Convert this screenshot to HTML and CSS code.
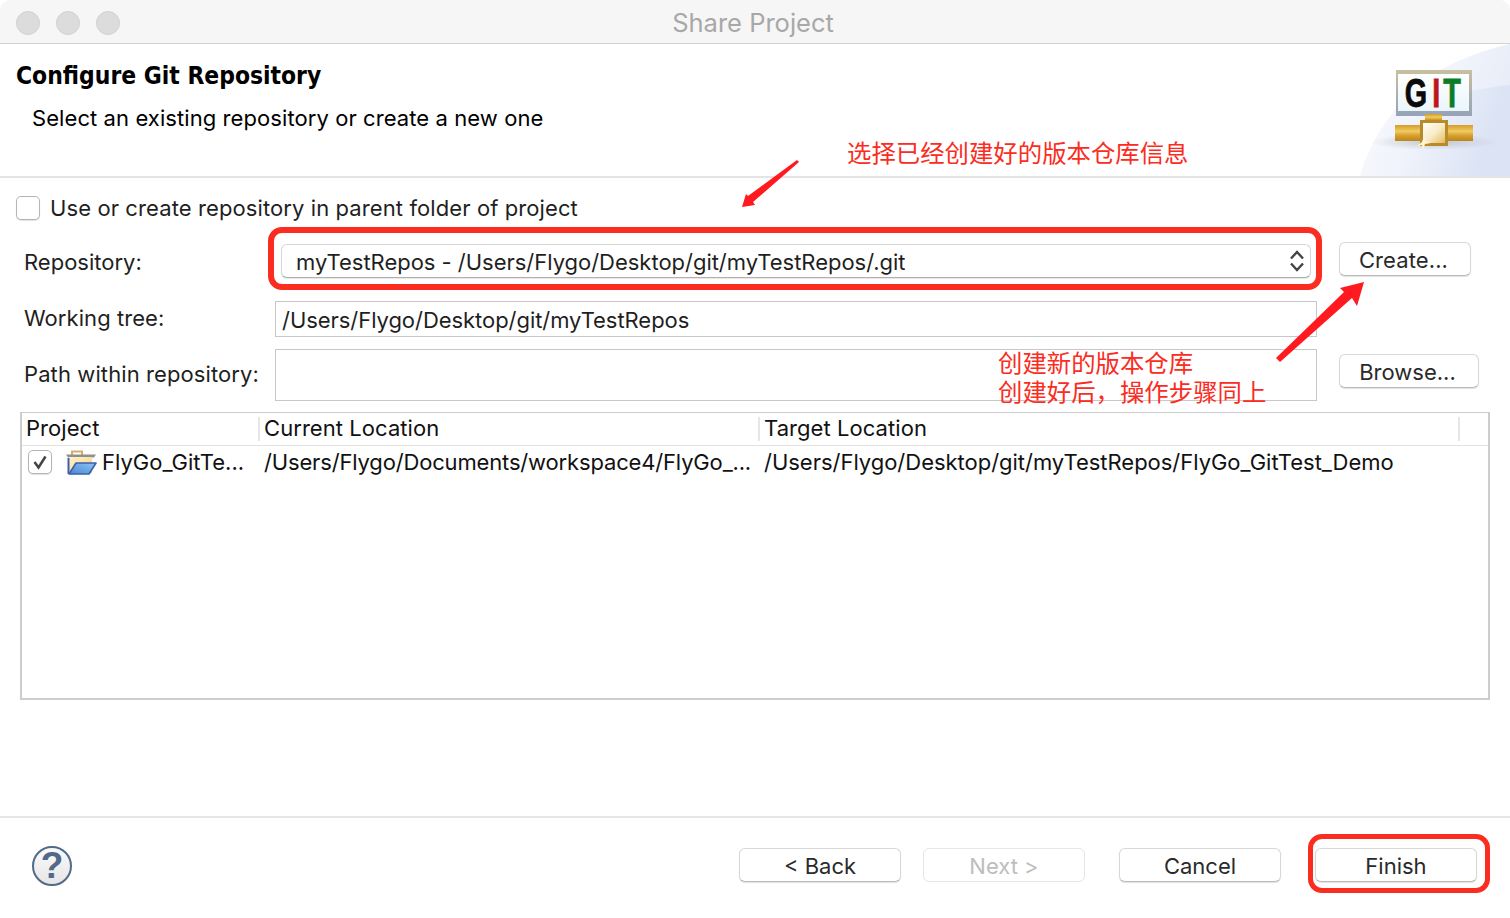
FILE: index.html
```html
<!DOCTYPE html>
<html lang="en">
<head>
<meta charset="utf-8">
<title>Share Project</title>
<link rel="stylesheet" href="styles.css">
</head>
<body>
<div class="window">
  <header class="titlebar">
    <div class="lights"><span class="light"></span><span class="light"></span><span class="light"></span></div>
    <div class="title">Share Project</div>
  </header>
  <section class="banner">
    <div class="banner-text">
      <h1 class="heading">Configure Git Repository</h1>
      <p class="sub">Select an existing repository or create a new one</p>
    </div>
    <svg class="banner-art" width="152" height="133" viewBox="0 0 152 133">
      <defs>
        <linearGradient id="wash" x1="0" y1="0" x2="1" y2="0.3"><stop offset="0" stop-color="#fbfcfe"/><stop offset=".5" stop-color="#f0f3fb"/><stop offset="1" stop-color="#dbe3f4"/></linearGradient>
        <linearGradient id="pipe" x1="0" y1="0" x2="0" y2="1"><stop offset="0" stop-color="#d69c2a"/><stop offset=".4" stop-color="#f0cb62"/><stop offset=".65" stop-color="#d8a02c"/><stop offset="1" stop-color="#b88420"/></linearGradient>
        <linearGradient id="cube" x1="0" y1="0" x2="1" y2="1"><stop offset="0" stop-color="#ffffff"/><stop offset=".5" stop-color="#f8eecb"/><stop offset="1" stop-color="#e4b44c"/></linearGradient>
        <linearGradient id="sign" x1="0" y1="0" x2="0" y2="1"><stop offset="0" stop-color="#c8bf9f"/><stop offset="1" stop-color="#95a3b8"/></linearGradient>
        <linearGradient id="screen" x1="0" y1="0" x2="0" y2="1"><stop offset="0" stop-color="#ffffff"/><stop offset="1" stop-color="#eaf6fb"/></linearGradient>
        <radialGradient id="shadow"><stop offset="0" stop-color="#a4a6ac" stop-opacity=".55"/><stop offset="1" stop-color="#a4a6ac" stop-opacity="0"/></radialGradient>
      </defs>
      <path d="M2 133C10 95 50 40 88 23C110 12 130 5 152 0V133Z" fill="url(#wash)"/>
      <path d="M60 62C90 50 120 45 152 41V0C130 5 110 12 88 23C78 28 68 40 60 62Z" fill="#fff" opacity=".35"/>
      <ellipse cx="76" cy="98" rx="64" ry="8" fill="url(#shadow)"/>
      <rect x="38" y="26" width="76" height="46" fill="url(#sign)"/>
      <rect x="40" y="30" width="71" height="37" fill="url(#screen)"/>
      <text class="git-letter" transform="scale(.72 1)" y="63"><tspan x="65" fill="#0a0a0a" stroke="#0a0a0a">G</tspan><tspan x="103" fill="#c0141c" stroke="#c0141c">I</tspan><tspan x="118.5" fill="#0b7d25" stroke="#0b7d25">T</tspan></text>
      <rect x="67" y="70" width="17" height="8" fill="url(#pipe)"/>
      <rect x="37" y="81" width="78" height="16" fill="url(#pipe)"/>
      <rect x="63.5" y="77.5" width="25" height="23" fill="url(#cube)" stroke="#b78a2a" stroke-width="3"/>
      <path d="M59 102L64 98L66 92L67.5 97L73 99L67 100L65 106L64 101Z" fill="#fff6cf"/>
    </svg>
  </section>

  <main class="form">
    <label class="check-row"><span class="checkbox"></span><span class="tight">Use or create repository in parent folder of project</span></label>
    <div class="field-row repo-row">
      <span class="field-label">Repository:</span>
      <div class="select">
        <span class="select-text">myTestRepos - /Users/Flygo/Desktop/git/myTestRepos/.git</span>
        <svg class="updown" width="14" height="24" viewBox="0 0 14 24"><path d="M1 9.5L7 3L13 9.5M1 14.5L7 21L13 14.5" fill="none" stroke="#444" stroke-width="2.4"/></svg>
      </div>
      <button class="btn btn-create">Create...</button>
    </div>
    <div class="field-row tree-row">
      <span class="field-label">Working tree:</span>
      <div class="input tree-input">/Users/Flygo/Desktop/git/myTestRepos</div>
    </div>
    <div class="field-row path-row">
      <span class="field-label path-label">Path within repository:</span>
      <div class="input path-input"></div>
      <button class="btn btn-browse">Browse...</button>
    </div>

    <div class="table">
      <div class="thead">
        <div class="th">Project</div>
        <div class="th">Current Location</div>
        <div class="th">Target Location</div>
        <div class="th"></div>
      </div>
      <div class="tr">
        <div class="td project-cell">
          <span class="checkbox"><svg width="16" height="16" viewBox="0 0 16 16"><path d="M2.5 8L6.5 13.5L13.5 2.5" fill="none" stroke="#444" stroke-width="2.5"/></svg></span>
          <svg class="folder" width="32" height="26" viewBox="0 0 32 26">
            <defs>
              <linearGradient id="paper" x1="0" y1="0" x2="1" y2="1"><stop offset="0" stop-color="#fff3c8"/><stop offset="1" stop-color="#f6cf80"/></linearGradient>
              <linearGradient id="flap" x1="1" y1="0" x2="0" y2="1"><stop offset="0" stop-color="#8cc6f6"/><stop offset="1" stop-color="#4a86d2"/></linearGradient>
            </defs>
            <path d="M7 8V2.5h10V8" fill="none" stroke="#d2ad6c" stroke-width="2"/>
            <path d="M1 5.5h30l-2 3H3z" fill="#8f8f8f"/>
            <path d="M4 8h23v16H4z" fill="url(#paper)"/>
            <path d="M3.5 9V25" stroke="#3c5fae" stroke-width="2"/>
            <path d="M11 14H31L24 25H4z" fill="url(#flap)" stroke="#3c5fae" stroke-width="1.6" stroke-linejoin="round"/>
          </svg>
          <span class="cell-text">FlyGo_GitTe...</span>
        </div>
        <div class="td cell-current">/Users/Flygo/Documents/workspace4/FlyGo_...</div>
        <div class="td cell-target">/Users/Flygo/Desktop/git/myTestRepos/FlyGo_GitTest_Demo</div>
      </div>
    </div>
  </main>

  <footer class="footer">
    <div class="help">?</div>
    <div class="footer-buttons">
      <button class="btn wide">&lt; Back</button>
      <button class="btn wide disabled">Next &gt;</button>
      <button class="btn wide cancel">Cancel</button>
      <button class="btn wide finish">Finish</button>
    </div>
  </footer>
</div>

<div class="note note-a">选择已经创建好的版本仓库信息</div>
<div class="note note-b">创建新的版本仓库<br>创建好后，操作步骤同上</div>
<div class="redbox redbox-repo"></div>
<div class="redbox redbox-finish"></div>
<svg class="arrows" width="1510" height="918" viewBox="0 0 1510 918">
  <path d="M797 160L748 196L746 194L742 207L755 205L753 202L799 162Z" fill="#ff1a20"/>
  <path d="M1280 362L1352 298L1357 306L1364 282L1340 288L1344 292L1276 358Z" fill="#ff1a20"/>
</svg>
</body>
</html>
```
FILE: styles.css
```css
* { box-sizing: border-box; }
html, body { margin: 0; padding: 0; background: #fff; }
body {
  position: relative;
  width: 1510px;
  height: 918px;
  overflow: hidden;
  font-family: "Inter", "Liberation Sans", sans-serif;
  font-size: 22px;
  color: #1f1f1f;
}
.window { width: 1510px; height: 918px; display: flex; flex-direction: column; background: #fff; }

.titlebar {
  height: 44px;
  flex: none;
  background: #f6f6f6;
  border-bottom: 1px solid #d2d2d2;
  border-radius: 10px 10px 0 0;
  position: relative;
  display: flex;
  align-items: center;
  justify-content: center;
}
.lights { position: absolute; left: 16px; top: 11px; display: flex; gap: 16px; }
.light { width: 24px; height: 24px; border-radius: 50%; background: #dcdcdc; border: 1px solid #d2d2d2; }
.title { color: #a8a8a8; font-size: 25.5px; margin-left: -4px; margin-top: 2px; }

.banner {
  height: 134px;
  flex: none;
  border-bottom: 2px solid #e4e4e4;
  display: flex;
  justify-content: space-between;
  overflow: hidden;
}
.banner-text { padding: 15px 0 0 16px; }
.heading { margin: 0; font: bold 24.4px/34px "DejaVu Sans Condensed", "DejaVu Sans", sans-serif; color: #000; }
.sub { margin: 10px 0 0 16px; font-size: 22px; line-height: 30px; color: #000; letter-spacing: .08px; }
.banner-art { flex: none; }
.git-letter { font: bold 40px "Liberation Sans", sans-serif; stroke-width: .8px; }

.form { flex: 1; display: flex; flex-direction: column; padding: 0 20px; }
.check-row { display: flex; align-items: center; gap: 10px; margin: 17px 0 0 -4px; height: 26px; }
.tight { letter-spacing: .1px; }
.checkbox {
  flex: none;
  width: 24px;
  height: 24px;
  border: 1px solid #b4b4b4;
  border-radius: 5px;
  background: #fff;
  box-shadow: 0 1px 1px rgba(0,0,0,.12);
  display: flex;
  align-items: center;
  justify-content: center;
}
.field-row { display: flex; align-items: flex-start; }
.field-label { flex: none; width: 251px; margin-left: 4px; }
.repo-row { margin-top: 21px; height: 36px; }
.repo-row .field-label { line-height: 40px; }
.select {
  flex: none;
  width: 1030px;
  height: 34px;
  margin: 2px 0 0 6px;
  border-radius: 6px;
  border: 1px solid #d6d6d6;
  border-bottom-color: #b0b0b0;
  background: #fff;
  box-shadow: 0 1px 1px rgba(0,0,0,.1);
  display: flex;
  align-items: center;
  justify-content: space-between;
  padding: 0 6px 0 14px;
}
.select-text { padding-top: 2px; letter-spacing: -.02px; }
.btn {
  font: inherit;
  color: #2a2a2a;
  height: 34px;
  padding: 2px 0 0;
  background: #fff;
  border: 1px solid #d8d8d8;
  border-bottom-color: #bbb;
  border-radius: 6px;
  box-shadow: 0 1px 1px rgba(0,0,0,.12);
}
.btn-create { width: 132px; margin-left: 28px; padding-right: 3px; letter-spacing: .1px; }
.tree-row { margin-top: 23px; height: 36px; }
.tree-row .field-label { line-height: 34px; letter-spacing: .06px; }
.path-label { letter-spacing: .1px; }
.input {
  flex: none;
  width: 1042px;
  border: 1px solid #c8c8c8;
  background: #fff;
  padding-left: 6px;
}
.tree-input { height: 36px; line-height: 36px; letter-spacing: -.05px; }
.path-row { margin-top: 12px; height: 52px; }
.path-row .field-label { line-height: 50px; }
.path-input { height: 52px; }
.btn-browse { width: 140px; margin: 5px 0 0 22px; padding-right: 3px; }

.table { margin-top: 11px; width: 1470px; height: 288px; border: 2px solid #cdcdcd; border-top-width: 1px; }
.thead, .tr { display: grid; grid-template-columns: 236px 500px 700px 1fr; }
.thead { height: 33px; border-bottom: 1px solid #e2e2e2; align-items: center; }
.th { height: 24px; line-height: 22px; padding-left: 4px; color: #111; letter-spacing: .06px; }
.th + .th { border-left: 2px solid #e6e6e6; padding-left: 4px; }
.tr { height: 34px; align-items: center; color: #111; }
.td { white-space: nowrap; padding: 0 0 2px 6px; }
.cell-current { letter-spacing: -.16px; }
.cell-target { letter-spacing: -.02px; }
.project-cell { display: flex; align-items: center; padding-left: 6px; }
.folder { margin-left: 13px; flex: none; }
.cell-text { margin-left: 5px; }

.footer {
  height: 102px;
  flex: none;
  border-top: 2px solid #e6e6e6;
  display: flex;
  justify-content: space-between;
  padding: 28px 33px 0 32px;
}
.help {
  width: 40px;
  height: 40px;
  border-radius: 50%;
  border: 2px solid #516a8a;
  background: linear-gradient(#fafafa, #e6e6e6);
  color: #516a8a;
  font: bold 37px/36px "Liberation Sans", sans-serif;
  text-align: center;
}
.footer-buttons { display: flex; padding-top: 2px; }
.wide { width: 162px; margin-left: 22px; }
.disabled { color: #bdbdbd; border-color: #e6e6e6; box-shadow: none; }
.cancel { margin-left: 34px; }
.finish { margin-left: 34px; }

.note { position: absolute; color: #fb2c22; font: 24.4px/29px "Noto Sans CJK SC", sans-serif; white-space: nowrap; }
.note-a { left: 847px; top: 137px; }
.note-b { left: 998px; top: 347px; }
.redbox { position: absolute; border: 6px solid #fb2d20; border-radius: 14px; }
.redbox-repo { left: 268px; top: 227px; width: 1054px; height: 63px; }
.redbox-finish { left: 1308px; top: 834px; width: 182px; height: 59px; border-width: 5px; }
.arrows { position: absolute; left: 0; top: 0; pointer-events: none; }
```
